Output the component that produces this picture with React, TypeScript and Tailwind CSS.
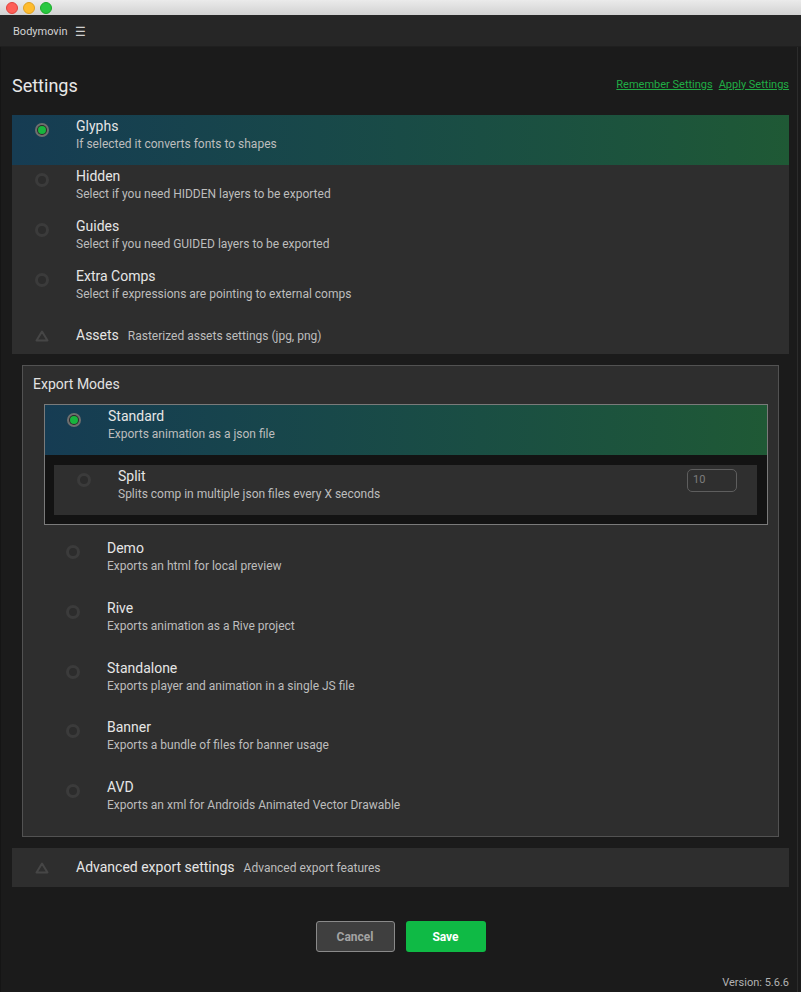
import React from 'react';

const font = { fontFamily: 'Roboto, "Noto Sans", sans-serif' };

function Radio({ checked }: { checked?: boolean }) {
  if (checked) {
    return (
      <span className="w-[14px] h-[14px] rounded-full bg-[#6f6f6f] flex items-center justify-center shrink-0">
        <span className="w-[10px] h-[10px] rounded-full bg-[#2a2a2a] flex items-center justify-center">
          <span className="w-[8px] h-[8px] rounded-full bg-[#18b53e]" />
        </span>
      </span>
    );
  }
  return <span className="block w-[14px] h-[14px] rounded-full border-[3px] border-[#3b3b3b] bg-[#2c2c2c] shrink-0" />;
}

function Triangle() {
  return (
    <svg width="14" height="12" viewBox="0 0 14 12" className="shrink-0">
      <path d="M7 1.5 L12.5 10.5 L1.5 10.5 Z" fill="none" stroke="#464646" strokeWidth="2" strokeLinejoin="round" />
    </svg>
  );
}

function Row({ title, desc, checked, hl, pad = 'pl-[23px]', h = 'h-[50px]' }: { title: string; desc: string; checked?: boolean; hl?: boolean; pad?: string; h?: string }) {
  return (
    <div className={`${h} flex items-start ${pad} pt-[2px] ${hl ? 'bg-gradient-to-r from-[#163c53] to-[#1f5935]' : ''}`}>
      <div className="pt-[6px]"><Radio checked={checked} /></div>
      <div className="w-[27px] shrink-0" />
      <div className="flex flex-col">
        <span className="text-[14px] leading-[18px] text-[#e6e6e6]">{title}</span>
        <span className="text-[12px] leading-[17px] text-[#bdbdbd] mt-[1px]">{desc}</span>
      </div>
    </div>
  );
}

export default function App() {
  return (
    <div className="w-[801px] h-[992px] bg-[#1b1b1b] flex flex-col overflow-hidden" style={font}>
      {/* Title bar */}
      <div className="h-[15px] bg-gradient-to-b from-[#ebebeb] to-[#d2d2d2] flex items-center gap-[5px] pl-[6px] shrink-0">
        <span className="w-[12px] h-[12px] rounded-full bg-[#fe5f57] border border-[#e0443e]" />
        <span className="w-[12px] h-[12px] rounded-full bg-[#febc2e] border border-[#dea123]" />
        <span className="w-[12px] h-[12px] rounded-full bg-[#28c840] border border-[#1aab29]" />
      </div>
      {/* Tab bar */}
      <div className="h-[32px] bg-[#262626] flex items-center pl-[13px] pt-[3px] gap-[8px] shrink-0 border-b border-[#1f1f1f]">
        <span className="text-[11px] text-[#d2d2d2]">Bodymovin</span>
        <span className="text-[12px] text-[#cfcfcf] leading-none">☰</span>
      </div>

      <div className="flex-1 flex border-r border-[#2c2c2c] border-l border-l-[#151515] mr-[3px]">
        <div className="flex-1 flex flex-col pl-[11px] pr-[8px]">
          {/* Header */}
          <div className="h-[68px] flex items-center justify-between pt-[8px]">
            <span className="text-[18px] text-[#e8e8e8]">Settings</span>
            <div className="flex gap-[6px] text-[11px] text-[#20ad45] underline">
              <span>Remember Settings</span>
              <span>Apply Settings</span>
            </div>
          </div>

          {/* Settings list */}
          <div className="bg-[#2e2e2e] flex flex-col">
            <Row title="Glyphs" desc="If selected it converts fonts to shapes" checked hl />
            <Row title="Hidden" desc="Select if you need HIDDEN layers to be exported" />
            <Row title="Guides" desc="Select if you need GUIDED layers to be exported" />
            <Row title="Extra Comps" desc="Select if expressions are pointing to external comps" />
            <div className="h-[39px] flex items-center pl-[23px] pt-[2px]">
              <Triangle />
              <div className="w-[27px] shrink-0" />
              <span className="text-[14px] text-[#e6e6e6]">Assets</span>
              <span className="text-[12px] text-[#bdbdbd] ml-[9px]">Rasterized assets settings (jpg, png)</span>
            </div>
          </div>

          {/* Export modes */}
          <div className="mt-[11px] mx-[10px] border border-[#525252] bg-[#2e2e2e] h-[472px] flex flex-col">
            <div className="h-[38px] flex items-center pl-[10px]">
              <span className="text-[14px] text-[#e2e2e2]">Export Modes</span>
            </div>
            <div className="ml-[21px] mr-[10px] border border-[#7a7a7a] flex flex-col bg-[#131313]">
              <Row title="Standard" desc="Exports animation as a json file" checked hl pad="pl-[22px]" />
              <div className="pl-[9px] pr-[10px] pt-[10px] pb-[9px]">
                <div className="bg-[#2f2f2f] h-[50px] flex items-start justify-between pr-[20px]">
                  <Row title="Split" desc="Splits comp in multiple json files every X seconds" pad="pl-[23px]" />
                  <div className="mt-[4px] w-[50px] h-[23px] rounded-[5px] border border-[#5e5e5e] text-[11px] text-[#7d7d7d] flex items-center pl-[5px]">10</div>
                </div>
              </div>
            </div>
            <div className="h-[12px]" />
            <Row title="Demo" desc="Exports an html for local preview" pad="pl-[43px]" h="h-[60px]" />
            <Row title="Rive" desc="Exports animation as a Rive project" pad="pl-[43px]" h="h-[60px]" />
            <Row title="Standalone" desc="Exports player and animation in a single JS file" pad="pl-[43px]" h="h-[60px]" />
            <Row title="Banner" desc="Exports a bundle of files for banner usage" pad="pl-[43px]" h="h-[60px]" />
            <Row title="AVD" desc="Exports an xml for Androids Animated Vector Drawable" pad="pl-[43px]" h="h-[60px]" />
          </div>

          {/* Advanced */}
          <div className="mt-[11px] h-[39px] bg-[#2e2e2e] flex items-center pl-[23px]">
            <Triangle />
            <div className="w-[27px] shrink-0" />
            <span className="text-[14px] text-[#e6e6e6]">Advanced export settings</span>
            <span className="text-[12px] text-[#bdbdbd] ml-[9px]">Advanced export features</span>
          </div>

          {/* Buttons */}
          <div className="mt-[34px] flex justify-center gap-[11px]">
            <button className="w-[79px] h-[31px] rounded-[3px] bg-[#3f3f3f] border border-[#8a8a8a] text-[12px] font-bold text-[#a3a3a3]">Cancel</button>
            <button className="w-[80px] h-[31px] rounded-[3px] bg-[#0fba45] text-[12px] font-bold text-white">Save</button>
          </div>

          <div className="flex-1" />
          <div className="flex justify-end pb-[1px]">
            <span className="text-[11px] text-[#b2b2b2]">Version: 5.6.6</span>
          </div>
        </div>
      </div>
    </div>
  );
}
